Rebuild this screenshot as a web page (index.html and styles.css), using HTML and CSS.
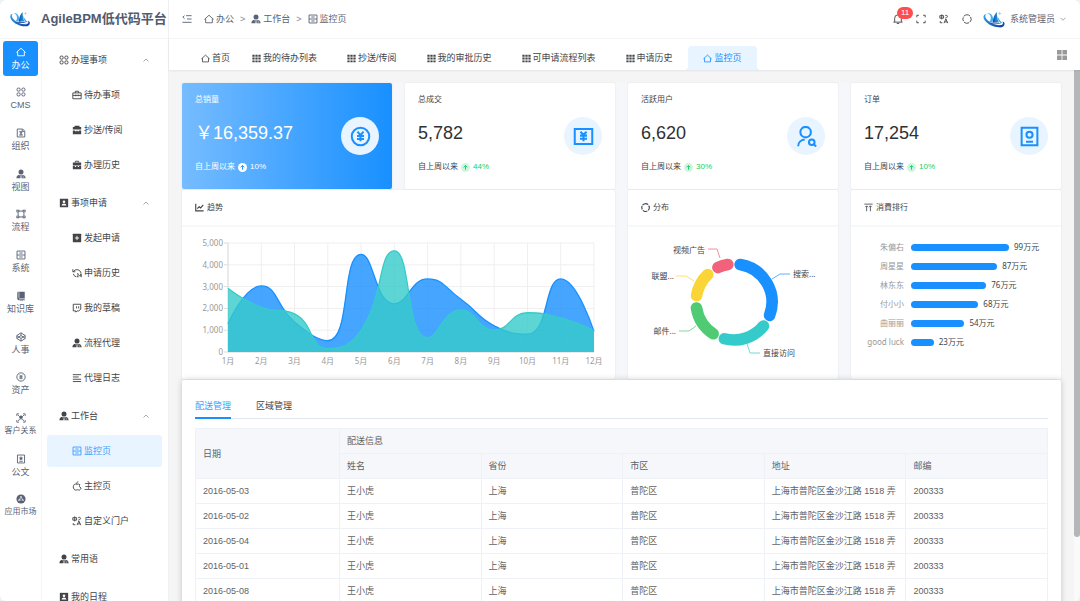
FILE: index.html
```html
<!DOCTYPE html>
<html lang="zh-CN">
<head>
<meta charset="utf-8">
<meta name="viewport" content="width=device-width, initial-scale=1">
<title>AgileBPM低代码平台</title>
<link rel="stylesheet" href="styles.css">
</head>
<body>
<svg class="sprite" aria-hidden="true">
  <defs>
    <linearGradient id="sea" x1="0" y1="0" x2="1" y2="1"><stop offset="0" stop-color="#35a8ee"/><stop offset="1" stop-color="#123a9c"/></linearGradient>
    <linearGradient id="sail" x1="0" y1="0" x2="1" y2="0"><stop offset="0" stop-color="#0f49a8"/><stop offset="1" stop-color="#2fb4f0"/></linearGradient>
  </defs>
  <symbol id="i-logo" viewBox="0 0 66 52">
    <path d="M9 9C0 10-2 20 5 29c8 11 26 20 43 21 12 1 19-5 17-13-1-3-3-4-6-5 3 5 1 10-6 11-10 2-27-4-38-13C6 23 4 14 9 9z" fill="url(#sea)"/>
    <path d="M12 6c9 3 12 10 11 18-1 5-3 9-6 11 3-1 6-1 9 0 4-3 5-8 4-14C29 12 22 6 12 6z" fill="#49aef0"/>
    <path d="M42 3c-8 7-12 18-13 33 6-3 14-3 20 0C44 26 41 15 42 3z" fill="url(#sail)"/>
    <path d="M44 15c0 8 3 15 8 21 3 0 5 0 8 1-8-5-13-13-16-22z" fill="#2a9be8"/>
    <path d="M20 38c10-5 25-4 37 2-12-2-25-2-37-2z" fill="#0d3f9e"/>
    <path d="M51 1l1 5 5 1-5 2-1 5-2-5-4-1 4-2z" fill="#7ed5f7"/>
  </symbol>
  <symbol id="i-home" viewBox="0 0 24 24"><path d="M1 13 12 3l11 10M4 11v10h16V11" class="s"/></symbol>
  <symbol id="i-apps" viewBox="0 0 24 24"><rect x="2.500" y="2.500" width="7.500" height="7.500" rx="3" class="s"/><rect x="14" y="2.500" width="7.500" height="7.500" rx="3" class="s"/><rect x="2.500" y="14" width="7.500" height="7.500" rx="3" class="s"/><rect x="14" y="14" width="7.500" height="7.500" rx="3" class="s"/></symbol>
  <symbol id="i-doc" viewBox="0 0 24 24"><path d="M3 2.500h13l5 5v14H3zM15 3v5h5M8 9h7M8 17h8M9 9l6 8M15 9l-6 8" class="s"/></symbol>
  <symbol id="i-user" viewBox="0 0 24 24"><circle cx="12" cy="7" r="6"/><path d="M9 14v3l2 5H1c0-5 3-8 8-8zM15 14v3l-2 5h10c0-5-3-8-8-8z"/><path d="M12 13l2 3-2 6-2-6z"/><path d="M16 17h4M16 20h4" stroke="#fff" stroke-width="1"/></symbol>
  <symbol id="i-flow" viewBox="0 0 24 24"><path d="M5 5h14v14H5z" class="s"/><path d="M1 2h7v6H1zM16 2h7v6h-7zM1 16h7v6H1zM16 16h7v6h-7z"/><path d="M3 4h3v2H3zM18 4h3v2h-3zM3 18h3v2H3zM18 18h3v2h-3z" fill="#fff"/></symbol>
  <symbol id="i-drawer" viewBox="0 0 24 24"><path d="M2.500 2.500h19v19h-19zM2.500 12h19M8 7.200h8M8 16.800h8" class="s"/></symbol>
  <symbol id="i-book" viewBox="0 0 24 24"><path d="M6 2h15v16H7v2h14v2H7q-4 0-4-4V5q0-3 3-3zM11 20h5v4l-2.500-2L11 24z"/><path d="M7 3v13" stroke="#fff" stroke-width="1.500"/></symbol>
  <symbol id="i-codepen" viewBox="0 0 24 24"><path d="M12 2 22 8.500v7L12 22 2 15.500v-7zM2 8.500l10 7 10-7M2 15.500l10-7 10 7M12 2v6.500M12 15.500V22" class="s"/></symbol>
  <symbol id="i-yen" viewBox="0 0 24 24"><circle cx="12" cy="12" r="10" class="s"/><path d="M8.500 6.500l3.500 4 3.500-4M12 10.500v7M8 11.500h8M8 14.800h8" class="s"/></symbol>
  <symbol id="i-scan" viewBox="0 0 24 24"><path d="M2 7V2h5M17 2h5v5M22 17v5h-5M7 22H2v-5M5 5l4 4M19 5l-4 4M6 19c1-4 3-5 6-5s5 1 6 5" class="s"/><circle cx="12" cy="10" r="4"/></symbol>
  <symbol id="i-mark" viewBox="0 0 24 24"><path d="M3.500 2.500h17v19h-17zM8 17.500h8" class="s"/><path d="M12 5l1.600 3.500 3.900.400-3 2.500.900 3.600-3.400-2-3.400 2 .900-3.600-3-2.500 3.900-.400z"/></symbol>
  <symbol id="i-store" viewBox="0 0 24 24"><circle cx="12" cy="12" r="11"/><path d="M13 5 6.500 16.500M11 5l6.500 11.500M5 14.500h8M15 14.500h4" stroke="#fff" stroke-width="1.600" fill="none"/></symbol>
  <symbol id="i-case" viewBox="0 0 24 24"><path d="M2 7h20v14H2zM8 7V3h8v4M2 13h20M9 11v4M15 11v4" class="s"/></symbol>
  <symbol id="i-case2" viewBox="0 0 24 24"><path d="M6 2h12v3h4v6H2V5h4zM2 13h5v2h4v-2h2v2h4v-2h5v9H2z"/></symbol>
  <symbol id="i-case3" viewBox="0 0 24 24"><path d="M8 6V3h8v3" class="s"/><path d="M2 6h20v7H2zM2 14.500h5v2h3v-2h4v2h3v-2h5V22H2z"/></symbol>
  <symbol id="i-contact" viewBox="0 0 24 24"><path d="M2 2h20v20H2z"/><circle cx="12" cy="9" r="3.200" fill="#fff"/><path d="M6 18q1-5 6-5t6 5z" fill="#fff"/></symbol>
  <symbol id="i-add" viewBox="0 0 24 24"><rect x="2" y="2" width="20" height="20" rx="1"/><path d="M12 7v10M7 12h10" stroke="#fff" stroke-width="2.200"/></symbol>
  <symbol id="i-history" viewBox="0 0 24 24"><path d="M3 9A10 10 0 0 1 21 10v3M2 3v6h6M3 14a10 10 0 0 0 7 7M12 14h3v3l-3 4h4M22 22v-8l-4 5h5" class="s"/></symbol>
  <symbol id="i-twitch" viewBox="0 0 24 24"><path d="M3 3h18v12l-5 4h-4l-3 3v-3H3zM11 8v5M16 8v5" class="s"/></symbol>
  <symbol id="i-lines" viewBox="0 0 24 24"><path d="M2 4h20M2 9.500h14M2 15h20M2 20.500h20" class="s"/></symbol>
  <symbol id="i-apple" viewBox="0 0 24 24"><path d="M19 9c-4-4-6 0-8-1-4-2-8 1-8 6 0 4 3 8 6 8 2 0 2-1 4-1s2 1 4 1 4-3 5-5c-5-2-5-6-3-8zM11 7c0-4 2-5 4-5" class="s"/></symbol>
  <symbol id="i-lang" viewBox="0 0 24 24"><path d="M2 4h9v6H2zM6.500 1v12M3 17v4h5M15 4c4-2 6 0 5 3-1 2-3 3-5 3M12 22l4.500-10L21 22M13.500 19h6" class="s"/></symbol>
  <symbol id="i-fold" viewBox="0 0 24 24"><path d="M10 4h13M12 12h11M1 20h22M6 4 2 7.500 6 11" class="s"/></symbol>
  <symbol id="i-grid9" viewBox="0 0 24 24"><path d="M1 2h6v5H1zM9 2h6v5H9zM17 2h6v5h-6zM1 9.500h6v5H1zM9 9.500h6v5H9zM17 9.500h6v5h-6zM1 17h6v5H1zM9 17h6v5H9zM17 17h6v5h-6z"/></symbol>
  <symbol id="i-bell" viewBox="0 0 24 24"><path d="M1 19.500h22M4 19V10a8 8 0 0 1 16 0v9M9 23h6" class="s"/></symbol>
  <symbol id="i-full" viewBox="0 0 24 24"><path d="M2 8V3h5M17 3h5v5M22 16v5h-5M7 21H2v-5" class="s"/></symbol>
  <symbol id="i-ring" viewBox="0 0 24 24"><path d="M4 6a10 10 0 0 1 15-1.500M20.500 7a10 10 0 0 1-1.500 12.500M17 21a10 10 0 0 1-12-1.500M3.500 17A10 10 0 0 1 3 8" class="s"/></symbol>
  <symbol id="i-four" viewBox="0 0 24 24"><path d="M0 0h11v11H0zM13 0h11v11H13zM0 13h11v11H0zM13 13h11v11H13z"/></symbol>
  <symbol id="i-up" viewBox="0 0 24 24"><path d="M2 18 12 8l10 10" class="s"/></symbol>
  <symbol id="i-down" viewBox="0 0 24 24"><path d="M2 7l10 10L22 7" class="s"/></symbol>
  <symbol id="i-bill" viewBox="0 0 24 24"><path d="M2 3.500h20v17H2zM8.500 6.500l3.500 3.500 3.500-3.500M12 10v7.500M8 11h8M8 14.500h8" class="s"/></symbol>
  <symbol id="i-search" viewBox="0 0 24 24"><circle cx="11" cy="7" r="6" class="s"/><path d="M2.500 23c0-4 3-7 7.500-7.500" class="s"/><circle cx="18" cy="18.500" r="3.200" class="s"/><path d="M20.500 21l2.500 2.500" class="s"/></symbol>
  <symbol id="i-card" viewBox="0 0 24 24"><path d="M3 2h18v20H3zM8 18h8" class="s"/><circle cx="12" cy="10" r="3.500" class="s"/></symbol>
  <symbol id="i-arrow" viewBox="0 0 24 24"><path d="M12 18V7M7 11.500l5-5 5 5" class="s"/></symbol>
  <symbol id="i-trend" viewBox="0 0 24 24"><path d="M2 2v19h21M6 15l5-5 4 3 7-8" class="s"/></symbol>
  <symbol id="i-top" viewBox="0 0 24 24"><path d="M1 3h22M7 22V8M3.500 11 7 7.500l3.500 3.500M17 22V8M13.500 11 17 7.500l3.500 3.500" class="s"/></symbol>
</svg>

<div class="app">
  <aside class="side">
    <header class="brand"><svg class="brand-logo"><use href="#i-logo"/></svg><h1>AgileBPM低代码平台</h1></header>
    <div class="side-body">
      <nav class="rail" aria-label="主导航">
        <a href="#" class="on"><svg><use href="#i-home"/></svg>办公</a>
        <a href="#"><svg><use href="#i-apps"/></svg>CMS</a>
        <a href="#"><svg><use href="#i-doc"/></svg>组织</a>
        <a href="#"><svg><use href="#i-user"/></svg>视图</a>
        <a href="#"><svg><use href="#i-flow"/></svg>流程</a>
        <a href="#"><svg><use href="#i-drawer"/></svg>系统</a>
        <a href="#"><svg><use href="#i-book"/></svg>知识库</a>
        <a href="#"><svg><use href="#i-codepen"/></svg>人事</a>
        <a href="#"><svg><use href="#i-yen"/></svg>资产</a>
        <a href="#" class="small"><svg><use href="#i-scan"/></svg>客户关系</a>
        <a href="#"><svg><use href="#i-mark"/></svg>公文</a>
        <a href="#" class="small"><svg><use href="#i-store"/></svg>应用市场</a>
      </nav>
      <nav class="menu" aria-label="办公菜单">
        <button type="button" class="group"><svg><use href="#i-apps"/></svg>办理事项<svg class="fold"><use href="#i-up"/></svg></button>
        <a href="#"><svg><use href="#i-case"/></svg>待办事项</a>
        <a href="#"><svg><use href="#i-case2"/></svg>抄送/传阅</a>
        <a href="#"><svg><use href="#i-case3"/></svg>办理历史</a>
        <button type="button" class="group"><svg><use href="#i-contact"/></svg>事项申请<svg class="fold"><use href="#i-up"/></svg></button>
        <a href="#"><svg><use href="#i-add"/></svg>发起申请</a>
        <a href="#"><svg><use href="#i-history"/></svg>申请历史</a>
        <a href="#"><svg><use href="#i-twitch"/></svg>我的草稿</a>
        <a href="#"><svg><use href="#i-user"/></svg>流程代理</a>
        <a href="#"><svg><use href="#i-lines"/></svg>代理日志</a>
        <button type="button" class="group"><svg><use href="#i-user"/></svg>工作台<svg class="fold"><use href="#i-up"/></svg></button>
        <a href="#" class="on"><svg><use href="#i-drawer"/></svg>监控页</a>
        <a href="#"><svg><use href="#i-apple"/></svg>主控页</a>
        <a href="#"><svg><use href="#i-lang"/></svg>自定义门户</a>
        <button type="button" class="group"><svg><use href="#i-user"/></svg>常用语</button>
        <button type="button" class="group"><svg><use href="#i-contact"/></svg>我的日程</button>
      </nav>
    </div>
  </aside>

  <div class="main">
    <header class="topbar">
      <button type="button" class="icon-btn" aria-label="收起菜单"><svg><use href="#i-fold"/></svg></button>
      <nav class="crumbs" aria-label="面包屑">
        <a href="#"><svg><use href="#i-home"/></svg>办公</a><span class="sep">&gt;</span>
        <a href="#"><svg><use href="#i-user"/></svg>工作台</a><span class="sep">&gt;</span>
        <a href="#"><svg><use href="#i-drawer"/></svg>监控页</a>
      </nav>
      <div class="tools">
        <button type="button" class="icon-btn bell" aria-label="消息"><svg><use href="#i-bell"/></svg><span class="badge">11</span></button>
        <button type="button" class="icon-btn" aria-label="全屏"><svg><use href="#i-full"/></svg></button>
        <button type="button" class="icon-btn" aria-label="语言"><svg><use href="#i-lang"/></svg></button>
        <button type="button" class="icon-btn" aria-label="刷新"><svg><use href="#i-ring"/></svg></button>
      </div>
      <button type="button" class="account"><svg class="avatar"><use href="#i-logo"/></svg>系统管理员<svg class="caret"><use href="#i-down"/></svg></button>
    </header>

    <nav class="tabs" aria-label="页签">
      <a href="#" class="first"><svg><use href="#i-home"/></svg>首页</a>
      <a href="#"><svg><use href="#i-grid9"/></svg>我的待办列表</a>
      <a href="#"><svg><use href="#i-grid9"/></svg>抄送/传阅</a>
      <a href="#"><svg><use href="#i-grid9"/></svg>我的审批历史</a>
      <a href="#"><svg><use href="#i-grid9"/></svg>可申请流程列表</a>
      <a href="#"><svg><use href="#i-grid9"/></svg>申请历史</a>
      <a href="#" class="on"><svg><use href="#i-home"/></svg>监控页</a>
      <button type="button" class="icon-btn more" aria-label="更多页签"><svg><use href="#i-four"/></svg></button>
    </nav>

    <div class="view">
      <main class="content">
        <div class="dash">
          <section class="card stat hero">
            <div><h2>总销量</h2><p class="num">￥16,359.37</p><p class="since">自上周以来<span class="rise"><svg><use href="#i-arrow"/></svg></span><b>10%</b></p></div>
            <span class="disc"><svg><use href="#i-yen"/></svg></span>
          </section>
          <section class="card stat">
            <div><h2>总成交</h2><p class="num">5,782</p><p class="since">自上周以来<span class="rise"><svg><use href="#i-arrow"/></svg></span><b>44%</b></p></div>
            <span class="disc"><svg><use href="#i-bill"/></svg></span>
          </section>
          <section class="card stat">
            <div><h2>活跃用户</h2><p class="num">6,620</p><p class="since">自上周以来<span class="rise"><svg><use href="#i-arrow"/></svg></span><b>30%</b></p></div>
            <span class="disc"><svg><use href="#i-search"/></svg></span>
          </section>
          <section class="card stat">
            <div><h2>订单</h2><p class="num">17,254</p><p class="since">自上周以来<span class="rise"><svg><use href="#i-arrow"/></svg></span><b>10%</b></p></div>
            <span class="disc"><svg><use href="#i-card"/></svg></span>
          </section>

          <section class="card wide">
            <h2 class="head"><svg class="semi"><use href="#i-trend"/></svg>趋势</h2>
            <svg class="chart" id="trend" viewBox="0 0 433 152" role="img" aria-label="趋势"></svg>
          </section>
          <section class="card">
            <h2 class="head"><svg class="semi"><use href="#i-ring"/></svg>分布</h2>
            <svg class="chart" id="share" viewBox="0 0 210 152" role="img" aria-label="分布">
              <g class="lead">
                <path d="M144 52l8-5h10" stroke="#1890ff"/>
                <path d="M119 117l3 9h10" stroke="#36cbcb"/>
                <path d="M68 99l-7 5H51" stroke="#4ecb73"/>
                <path d="M66 54l-8-5H48" stroke="#fbd437"/>
                <path d="M92 31l-3-9h-9" stroke="#f2637b"/>
              </g>
              <text x="165" y="50">搜索...</text>
              <text x="135" y="129">直接访问</text>
              <text x="48" y="107" text-anchor="end">邮件...</text>
              <text x="46" y="52" text-anchor="end">联盟...</text>
              <text x="77" y="26" text-anchor="end">视频广告</text>
            </svg>
          </section>
          <section class="card">
            <h2 class="head"><svg><use href="#i-top"/></svg>消費排行</h2>
            <ul class="rank">
              <li><span>朱偏右</span><div><i style="--v:99"></i>99万元</div></li>
              <li><span>周星星</span><div><i style="--v:87"></i>87万元</div></li>
              <li><span>林东东</span><div><i style="--v:76"></i>76万元</div></li>
              <li><span>付小小</span><div><i style="--v:68"></i>68万元</div></li>
              <li><span>曲丽丽</span><div><i style="--v:54"></i>54万元</div></li>
              <li><span>good luck</span><div><i style="--v:23"></i>23万元</div></li>
            </ul>
          </section>
        </div>

        <section class="delivery">
          <div class="subtabs" role="tablist">
            <button type="button" role="tab" aria-selected="true">配送管理</button>
            <button type="button" role="tab" aria-selected="false">区域管理</button>
          </div>
          <table>
            <colgroup><col class="c-date"><col><col><col><col><col></colgroup>
            <thead>
              <tr><th rowspan="2">日期</th><th colspan="5">配送信息</th></tr>
              <tr><th>姓名</th><th>省份</th><th>市区</th><th>地址</th><th>邮编</th></tr>
            </thead>
            <tbody>
              <tr><td>2016-05-03</td><td>王小虎</td><td>上海</td><td>普陀区</td><td>上海市普陀区金沙江路 1518 弄</td><td>200333</td></tr>
              <tr><td>2016-05-02</td><td>王小虎</td><td>上海</td><td>普陀区</td><td>上海市普陀区金沙江路 1518 弄</td><td>200333</td></tr>
              <tr><td>2016-05-04</td><td>王小虎</td><td>上海</td><td>普陀区</td><td>上海市普陀区金沙江路 1518 弄</td><td>200333</td></tr>
              <tr><td>2016-05-01</td><td>王小虎</td><td>上海</td><td>普陀区</td><td>上海市普陀区金沙江路 1518 弄</td><td>200333</td></tr>
              <tr><td>2016-05-08</td><td>王小虎</td><td>上海</td><td>普陀区</td><td>上海市普陀区金沙江路 1518 弄</td><td>200333</td></tr>
            </tbody>
          </table>
        </section>
      </main>
      <div class="track"><div class="thumb"></div></div>
    </div>
  </div>
</div>
<script src="charts.js"></script>
</body>
</html>
```
FILE: styles.css
```css
* { box-sizing: border-box; }
body {
  margin: 0;
  background: #eef0f2;
  color: #424448;
  font: 9px/12px "Liberation Sans", "Noto Sans CJK SC", sans-serif;
}
h1, h2, p, ul { margin: 0; padding: 0; font-weight: 400; }
a { color: inherit; text-decoration: none; }
button { padding: 0; border: 0; background: none; color: inherit; font: inherit; cursor: pointer; }
svg { display: block; flex: none; fill: currentColor; }
.s { fill: none; stroke: currentColor; stroke-width: var(--sw, 2.2); }
.sprite { position: absolute; width: 0; height: 0; }

.app { display: flex; height: 100vh; border-radius: 6px; overflow: hidden; background: #fff; }

/* sidebar */
.side { display: flex; flex-direction: column; width: 169px; flex: none; border-right: 1px solid #eff0f2; }
.brand { display: flex; align-items: center; gap: 11px; height: 39px; padding-left: 10px; border-bottom: 1px solid #f6f6f7; color: #515a6e; white-space: nowrap; }
.brand h1 { font-size: 13px; line-height: 20px; font-weight: 700; }
.brand-logo { width: 20px; height: 16px; }
.side-body { display: flex; flex: 1; min-height: 0; }
.rail { display: flex; flex-direction: column; justify-content: space-between; width: 42px; padding: 2px 3px 77px; border-right: 1px solid #f6f6f7; color: #5a6375; }
.rail a { display: flex; flex-direction: column; align-items: center; justify-content: center; gap: 2px; height: 35px; border-radius: 3px; white-space: nowrap; }
.rail svg { width: 10px; height: 10px; }
.rail .on { background: #1890ff; color: #fff; }
.rail .small { font-size: 8px; }
.menu { flex: 1; padding: 2px 6px 0 5px; overflow: hidden; }
.menu a, .group { display: flex; align-items: center; gap: 2px; width: 100%; }
.menu a { height: 32px; margin-bottom: 3px; padding-left: 25px; border-radius: 3px; }
.menu svg { width: 10px; height: 10px; }
.menu .on { background: #e8f4ff; color: #409eff; }
.group { height: 38px; padding: 0 13px 0 12px; }
.group .fold { width: 6px; height: 6px; margin-left: auto; color: #606266; }

/* top bar */
.main { display: flex; flex: 1; flex-direction: column; min-width: 0; }
.topbar { display: flex; align-items: center; height: 39px; padding: 0 14px 0 13px; border-bottom: 1px solid #f6f6f7; color: #5a6375; }
.icon-btn svg { width: 10px; height: 10px; }
.crumbs { display: flex; align-items: center; margin-left: 12px; }
.crumbs a { display: flex; align-items: center; gap: 2px; }
.crumbs svg { width: 10px; height: 10px; }
.sep { margin: 0 6px; color: #808695; }
.tools { display: flex; gap: 13px; margin-left: auto; color: #424448; }
.bell { position: relative; }
.badge { position: absolute; left: 4px; bottom: 5px; min-width: 16px; padding: 0 4px; border-radius: 6px; background: #ff4d4f; color: #fff; font-size: 8px; line-height: 12px; }
.account { display: flex; align-items: center; gap: 5px; margin-left: 11px; color: #5a6375; }
.avatar { width: 22px; height: 17px; }
.caret { width: 6px; height: 6px; }

/* page tabs */
.tabs { display: flex; align-items: flex-end; height: 31px; padding: 0 13px 0 17px; position: relative; z-index: 1; box-shadow: 0 1px 2px rgba(0, 21, 41, .08); white-space: nowrap; }
.tabs a { display: flex; align-items: center; gap: 2px; height: 24px; padding: 0 15px; }
.tabs a svg { width: 9px; height: 9px; }
.tabs .first { padding-right: 7px; }
.tabs .on { gap: 3px; background: #e8f4ff; color: #1890ff; border-radius: 4px 4px 0 0; position: relative; }
.tabs .on::before, .tabs .on::after { content: ""; position: absolute; bottom: 0; width: 4px; height: 4px; }
.tabs .on::before { right: 100%; background: radial-gradient(circle at 0 0, transparent 4px, #e8f4ff 4px); }
.tabs .on::after { left: 100%; background: radial-gradient(circle at 100% 0, transparent 4px, #e8f4ff 4px); }
.more { margin: 0 0 10px auto; color: #999; }

/* content */
.view { display: flex; flex: 1; min-height: 0; background: #f5f5f5; }
.content { flex: 1; min-width: 0; padding: 13px; overflow-y: auto; scrollbar-width: none; }
.track { width: 6px; flex: none; background: #fafafa; }
.thumb { height: 88%; background: #b5b6b8; border-radius: 0 0 3px 3px; }
.dash { display: grid; grid-template-columns: repeat(4, minmax(0, 1fr)); gap: 1px 13px; background: #f5f7fa; }
.card { background: #fff; border-radius: 2px; box-shadow: 0 0 2px rgba(0, 21, 41, .1); font-size: 8px; }
.wide { grid-column: span 2; }
.card h2 { font-size: 8px; }
.stat { display: flex; align-items: center; justify-content: space-between; padding: 11px 13px 16px; }
.stat > div { display: flex; flex-direction: column; }
.num { margin: 16px 0 17px; color: #303133; font-size: 18px; line-height: 22px; }
.since { display: flex; align-items: center; gap: 3px; }
.since b { font-weight: 400; color: #13ce66; }
.rise { border-radius: 50%; background: #d0f5e0; color: #13ce66; --sw: 2.5; }
.rise svg { width: 9px; height: 9px; }
.disc { display: grid; place-items: center; width: 38px; height: 38px; margin-top: 5px; border-radius: 50%; background: #e8f4ff; color: #1890ff; --sw: 2.3; }
.disc svg { width: 21px; height: 21px; }
.hero { background: linear-gradient(90deg, #76bcff, #1890ff); }
.hero h2, .hero .num, .hero .since, .hero .since b { color: #fff; }
.hero .rise { background: #fff; color: #1890ff; }
.head { display: flex; align-items: center; gap: 3px; height: 37px; padding: 0 13px; border-bottom: 2px solid #f7f8fb; }
.head svg { width: 9px; height: 9px; }
.head .semi { --sw: 3; }

/* charts */
.chart { width: 100%; height: auto; }
.chart text { font: 8px "Noto Sans", "Noto Sans CJK SC", sans-serif; fill: #424448; }
.chart .axis text { fill: #999; }
.grid { stroke: #efefef; fill: none; }
.axis path { stroke: #ddd; fill: none; }
.lead { fill: none; stroke-width: 1; opacity: .7; }
.arc { fill: none; stroke-width: 11.600; stroke-linecap: round; }
.line { fill: none; stroke-width: 1.300; }
.area { opacity: .8; }
.rank { display: grid; gap: 7px; padding: 14px 0 0; list-style: none; font-family: "Noto Sans", "Noto Sans CJK SC", sans-serif; }
.rank li { display: grid; grid-template-columns: 53px 1fr; align-items: center; gap: 7px; }
.rank li > span { text-align: right; color: #999; }
.rank div { display: flex; align-items: center; gap: 5px; }
.rank i { width: calc(var(--v) * .66%); height: 7px; border-radius: 4px; background: #1890ff; }

/* delivery table */
.delivery { position: relative; padding: 19px 13px 13px; background: #fff; border-radius: 2px; margin-top: 1px; box-shadow: 0 0 6px rgba(0, 0, 0, .2); }
.subtabs { display: flex; gap: 25px; margin-bottom: 9px; border-bottom: 1px solid #dfe4ed; }
.subtabs button { height: 20px; margin-bottom: -1px; padding-bottom: 4px; border-bottom: 2px solid transparent; }
.subtabs [aria-selected="true"] { color: #409eff; border-color: #1890ff; }
table { width: 100%; table-layout: fixed; border-collapse: collapse; color: #606266; }
.c-date { width: 144px; }
th, td { height: 25px; padding: 0 7px; border: 1px solid #eef1f6; text-align: left; font-weight: 400; white-space: nowrap; }
thead { background: #f5f7fa; }
```
FILE: charts.js
```js
const NS = "http://www.w3.org/2000/svg";

function add(parent, tag, attrs, text) {
  const el = document.createElementNS(NS, tag);
  for (const k in attrs) el.setAttribute(k, attrs[k]);
  if (text !== undefined) el.textContent = text;
  parent.appendChild(el);
  return el;
}

const clamp = (v, a, b) => Math.min(Math.max(v, Math.min(a, b)), Math.max(a, b));

// Cubic path through the points, without overshoot at peaks and valleys.
function smoothPath(pts) {
  let out = pts[0];
  let d = `M${pts[0]}`;
  for (let i = 1; i < pts.length; i++) {
    const [px, py] = pts[i - 1], [x, y] = pts[i];
    let c1 = [x, y], next = [x, y];
    if (i < pts.length - 1) {
      const [nx, ny] = pts[i + 1];
      const lp = Math.hypot(x - px, y - py), ln = Math.hypot(nx - x, ny - y);
      const r = 0.5 * ln / (ln + lp);
      const qx = clamp(x + (nx - px) * r, x, nx), qy = clamp(y + (ny - py) * r, y, ny);
      c1 = [clamp(x - (qx - x) * lp / ln, px, x), clamp(y - (qy - y) * lp / ln, py, y)];
      next = [clamp(x + (x - c1[0]) * ln / lp, x, nx), clamp(y + (y - c1[1]) * ln / lp, y, ny)];
    }
    d += `C${out} ${c1} ${x},${y}`;
    out = next;
  }
  return d;
}

function drawTrend() {
  const svg = document.getElementById("trend");
  const left = 46, right = 412, top = 16, bottom = 125;
  const step = (right - left) / 11;
  const grid = add(svg, "g", { class: "grid" });
  const axis = add(svg, "g", { class: "axis" });
  for (let i = 0; i <= 5; i++) {
    const y = bottom - i * (bottom - top) / 5;
    add(grid, "path", { d: `M${left} ${y}H${right}` });
    add(axis, "path", { d: `M${left - 4} ${y}H${left}` });
    add(axis, "text", { x: left - 5, y: y + 3, "text-anchor": "end" }, (i * 1000).toLocaleString("en-US"));
  }
  for (let m = 0; m < 12; m++) {
    const x = left + m * step;
    add(grid, "path", { d: `M${x} ${top}V${bottom}` });
    add(axis, "text", { x, y: bottom + 12, "text-anchor": "middle" }, `${m + 1}月`);
  }
  add(axis, "path", { d: `M${left} ${top}V${bottom}H${right}` });
  const series = [
    ["#1890ff", [1300, 3030, 1380, 520, 4480, 2210, 3350, 2420, 1200, 820, 3350, 940]],
    ["#36cbcb", [2920, 2050, 1750, 150, 1000, 4640, 650, 1930, 1010, 1800, 1560, 970]]
  ];
  for (const [color, data] of series) {
    const d = smoothPath(data.map((v, i) => [left + i * step, bottom - v * (bottom - top) / 5000]));
    add(svg, "path", { class: "area", d: `${d}V${bottom}H${left}Z`, fill: color });
    add(svg, "path", { class: "line", d, stroke: color });
  }
}

function drawShare() {
  const svg = document.getElementById("share");
  const cx = 106, cy = 75, r = 38, cap = 9.3;
  const slices = [["#1890ff", 1048], ["#36cbcb", 735], ["#4ecb73", 580], ["#fbd437", 484], ["#f2637b", 300]];
  const total = slices.reduce((sum, s) => sum + s[1], 0);
  const at = deg => {
    const a = deg * Math.PI / 180;
    return `${cx + r * Math.sin(a)} ${cy - r * Math.cos(a)}`;
  };
  let angle = 0;
  for (const [color, value] of slices) {
    const end = angle + value / total * 360;
    add(svg, "path", { class: "arc", d: `M${at(angle + cap)}A${r} ${r} 0 0 1 ${at(end - cap)}`, stroke: color });
    angle = end;
  }
}

drawTrend();
drawShare();
```
